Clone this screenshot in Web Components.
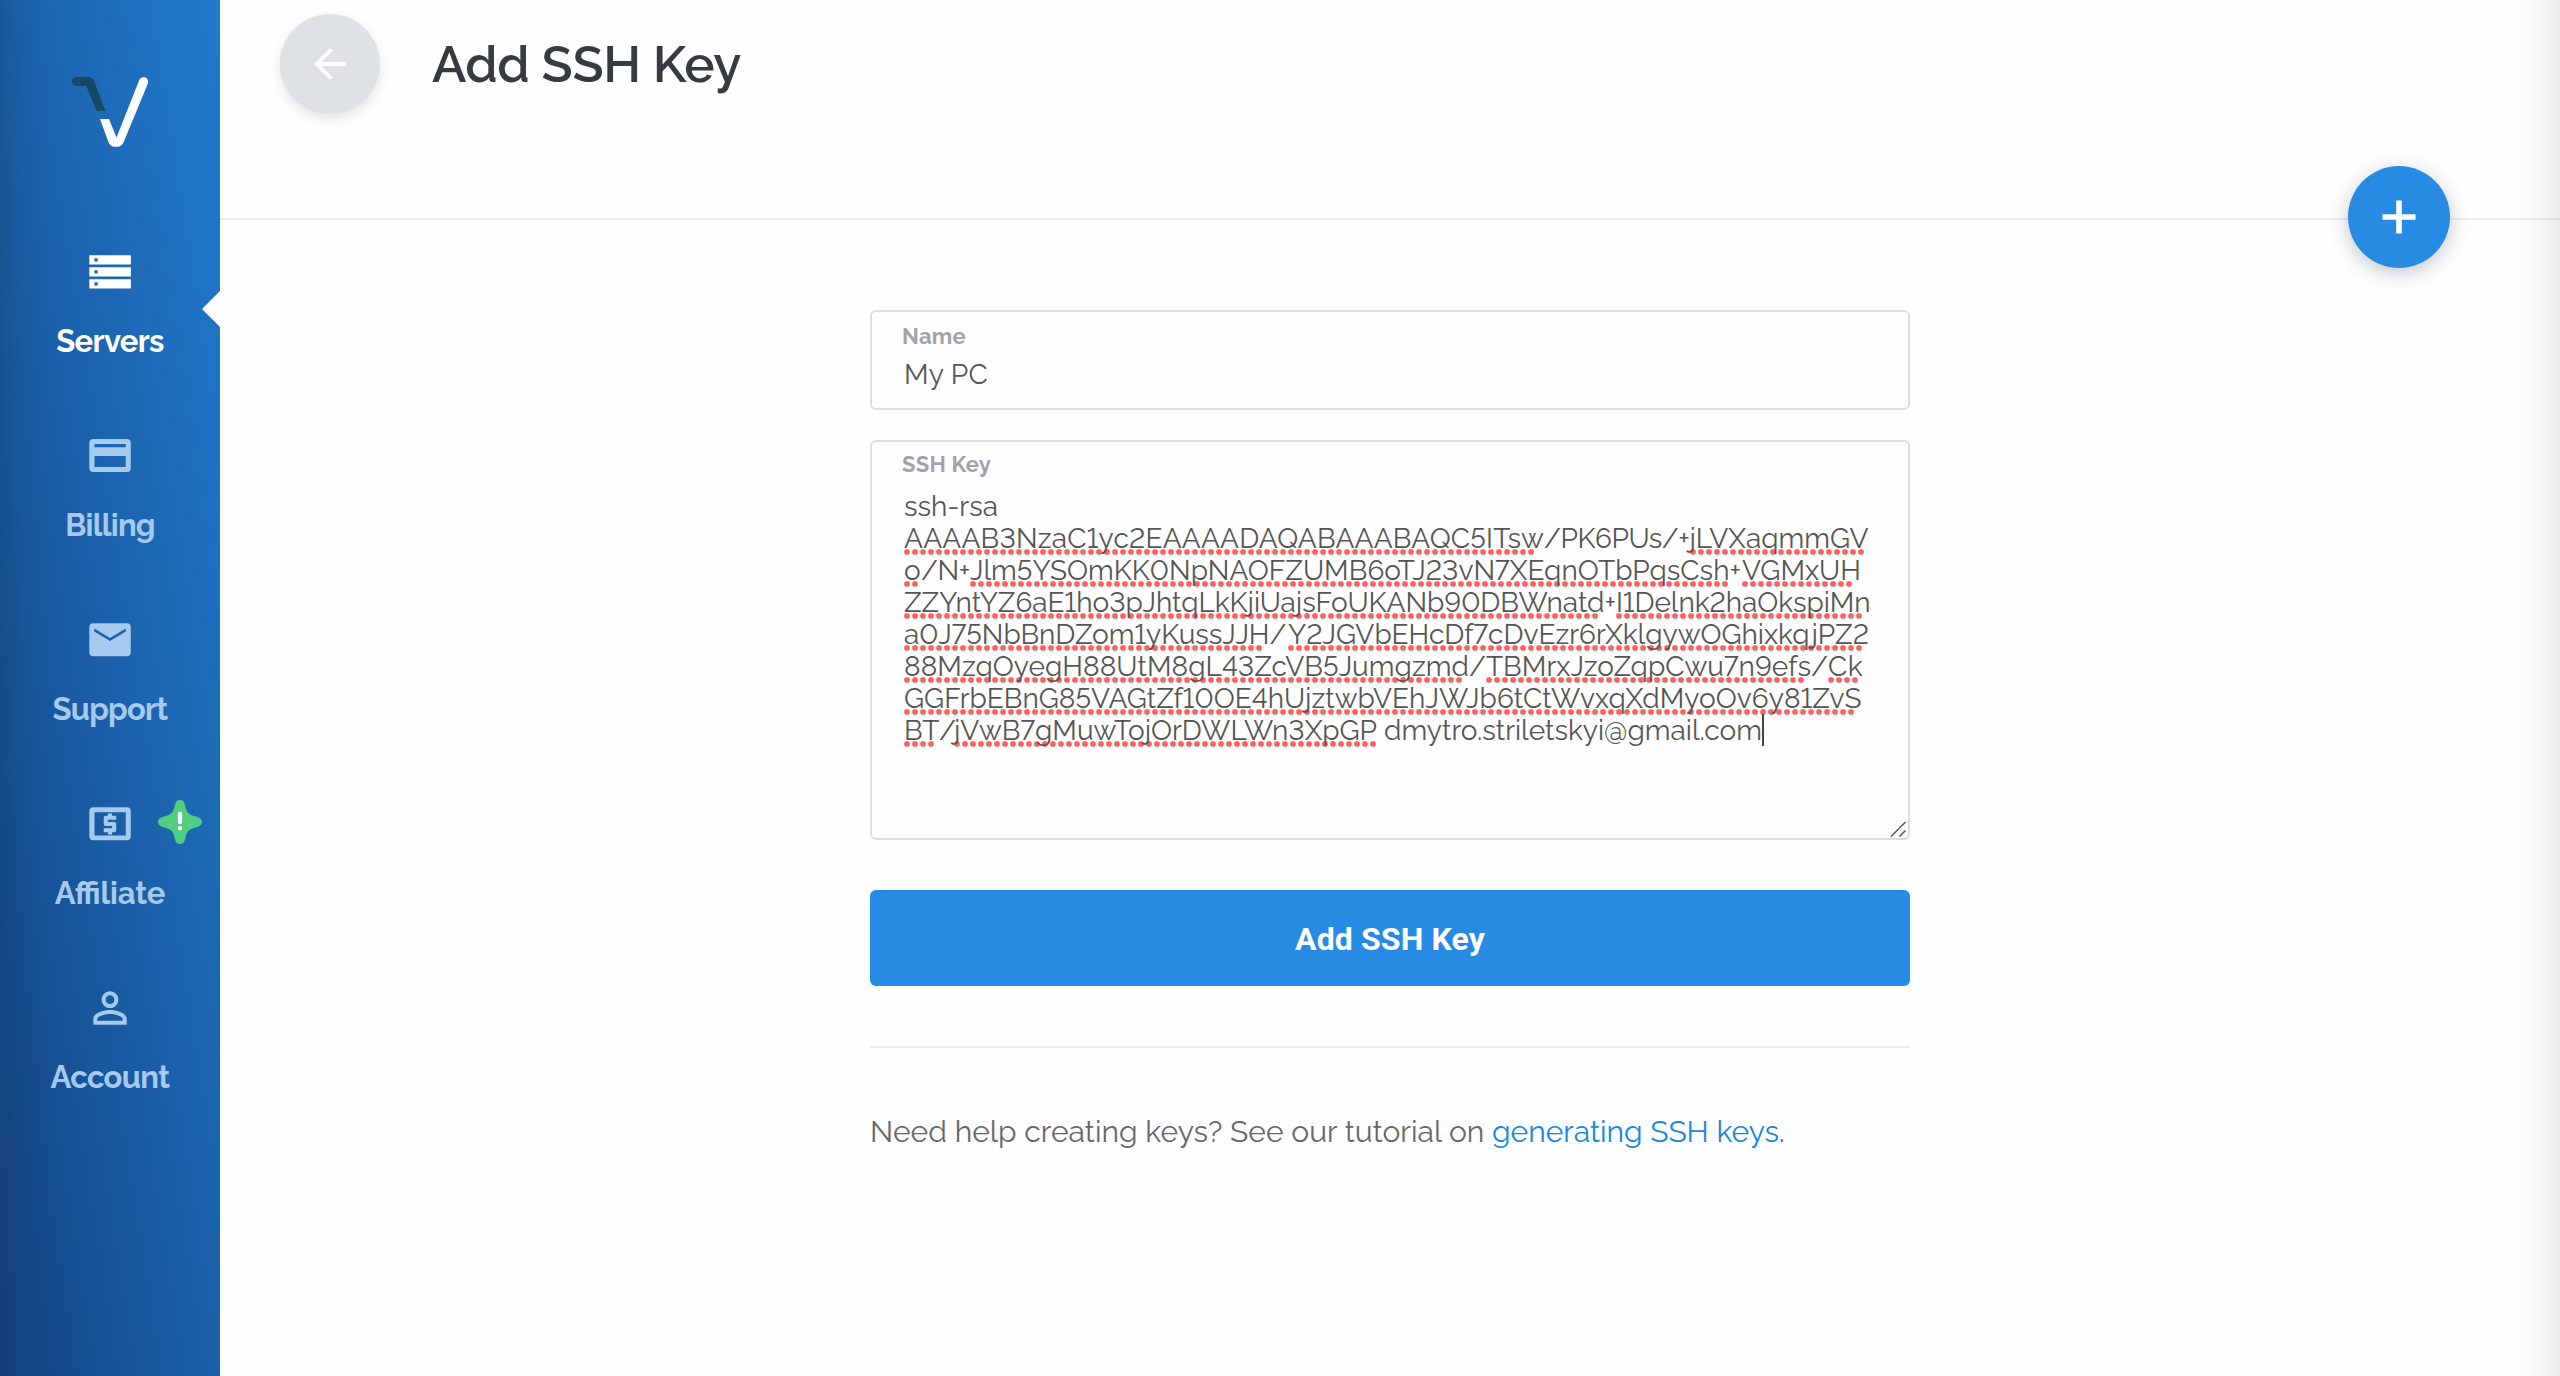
<!DOCTYPE html>
<html lang="en">
<head>
<meta charset="utf-8">
<title>Add SSH Key</title>
<style>
  html, body { margin: 0; height: 100%; }
  body { background: #fefefe; font-family: Raleway, Lato, "Open Sans", sans-serif; font-variant-numeric: lining-nums; color: #555; overflow: hidden; }
</style>
</head>
<body>
<app-shell>
  <side-bar slot="side">
    <nav-item icon="servers" label="Servers" w="107.5" active></nav-item>
    <nav-item icon="billing" label="Billing" w="89.5"></nav-item>
    <nav-item icon="support" label="Support" w="115"></nav-item>
    <nav-item icon="affiliate" label="Affiliate" w="110.5" badge></nav-item>
    <nav-item icon="account" label="Account" w="119"></nav-item>
  </side-bar>
  <page-header><fit-text w="309">Add SSH Key</fit-text></page-header>
  <form-panel>
    <text-field><fit-text slot="label" w="64">Name</fit-text><fit-text w="84">My PC</fit-text></text-field>
    <key-area></key-area>
    <submit-button><fit-text w="190">Add SSH Key</fit-text></submit-button>
    <help-note></help-note>
  </form-panel>
</app-shell>
<script>
const pending = [];
const define = (name, html, setup) => customElements.define(name, class extends HTMLElement {
  connectedCallback() {
    if (this.shadowRoot) return;
    const root = this.attachShadow({ mode: 'open' });
    const tpl = document.createElement('template');
    tpl.innerHTML = typeof html === 'function' ? html(this) : html;
    root.append(tpl.content.cloneNode(true));
    if (setup) setup(this, root);
  }
});

define('app-shell', `
  <style>
    :host { display: flex; width: 100%; height: 100vh; position: relative; }
    main { flex: 1; min-width: 0; display: flex; flex-direction: column; }
    .edge { position: absolute; right: 0; top: 0; bottom: 0; width: 54px; pointer-events: none;
      background: linear-gradient(to right, rgba(60,65,65,0), rgba(60,65,65,.012) 35%, rgba(60,65,65,.05) 72%, rgba(60,65,65,.11)); }
  </style>
  <slot name="side"></slot><main><slot></slot></main><div class="edge"></div>`);

define('side-bar', `
  <style>
    :host { display: flex; flex-direction: column; width: 220px; flex: none; height: 100%;
      background: linear-gradient(to right, rgba(20,50,80,.2), rgba(20,50,80,.07) 20px, rgba(20,50,80,0) 50px),
        linear-gradient(to top right, #134282 0%, #1b61ab 52%, #217bcf 100%); }
    .logo { height: 247px; flex: none; }
  </style>
  <svg class="logo" width="220" height="247" viewBox="0 0 220 247">
    <path fill="#154966" d="M76.4 77H88.5q4 0 5.5 3.8L105.5 111H96.6L86.3 86H76.4a4.5 4.5 0 0 1 0-9z"/>
    <path fill="#fff" d="M100 119h9L116.5 137.500 139.300 80a4.600 4.600 0 0 1 8.500 3.700L123.800 141.800q-2.100 5-6.200 5h-3.200q-4 0-6-4.800z"/>
  </svg>
  <slot></slot>`);

const icons = {
  servers: '<path fill-rule="evenodd" d="M4.300 8.200h41.600v9.400H4.300zm5.100 3v3.200h3.300v-3.200zM4.300 20.200h41.600v9.400H4.300zm5.100 3v3.200h3.300v-3.200zM4.300 32.200h41.600v9.400H4.300zm5.100 3v3.200h3.300v-3.200z"/>',
  billing: '<path fill-rule="evenodd" d="M8.300 8h33.500a4 4 0 0 1 4 4v25a4 4 0 0 1-4 4H8.300a4 4 0 0 1-4-4V12a4 4 0 0 1 4-4zM9.500 13v3.200h31.300V13zm0 12v11h31.300V25z"/>',
  support: '<path fill-rule="evenodd" d="M8.300 8.200h33.500a4 4 0 0 1 4 4v25a4 4 0 0 1-4 4H8.300a4 4 0 0 1-4-4v-25a4 4 0 0 1 4-4zM9.300 13.500v3L25 26.100l15.800-9.600v-3L25 23.100z"/>',
  affiliate: '<path fill-rule="evenodd" d="M8.300 8.200h33.500a4 4 0 0 1 4 4v25a4 4 0 0 1-4 4H8.300a4 4 0 0 1-4-4v-25a4 4 0 0 1 4-4zM9.500 13.200v23.300h31.300V13.200z"/><path transform="scale(2.0833)" d="M11 17h2v-1h1c.55 0 1-.45 1-1v-3c0-.55-.45-1-1-1h-3v-1h4V8h-2V7h-2v1h-1c-.55 0-1 .45-1 1v3c0 .55.45 1 1 1h3v1H9v2h2v1z"/>',
  account: '<path transform="scale(2.0833)" d="M12 5.900c1.160 0 2.100.94 2.100 2.100s-.94 2.100-2.100 2.100S9.900 9.160 9.900 8s.94-2.100 2.100-2.100m0 9c2.970 0 6.100 1.460 6.100 2.100v1.100H5.900V17c0-.64 3.130-2.100 6.100-2.100M12 4C9.790 4 8 5.790 8 8s1.790 4 4 4 4-1.790 4-4-1.790-4-4-4zm0 9c-2.670 0-8 1.340-8 4v3h16v-3c0-2.660-5.330-4-8-4z"/>'
};

define('nav-item', el => `
  <style>
    :host { display: flex; flex-direction: column; align-items: center; height: 184px; flex: none;
      position: relative; color: #a6caed; font-weight: 750; font-size: 31px; line-height: 40px;
      font-variant-ligatures: common-ligatures; font-feature-settings: "liga" 1; }
    :host([active]) { color: #fff; }
    .icon { margin-bottom: 24.300px; fill: currentColor; display: block; }
    .notch { position: absolute; right: 0; top: 44px; }
    .badge { position: absolute; left: 158px; top: 1px; }
  </style>
  <svg class="icon" width="50" height="50" viewBox="0 0 50 50">${icons[el.getAttribute('icon')]}</svg>
  <fit-text w="${el.getAttribute('w')}">${el.getAttribute('label')}</fit-text>
  ${el.hasAttribute('active') ? '<svg class="notch" width="18" height="36" viewBox="0 0 18 36"><path fill="#fefefe" d="M18 0v36L0 18z"/></svg>' : ''}
  ${el.hasAttribute('badge') ? `<svg class="badge" width="44" height="44" viewBox="0 0 44 44">
    <path fill="#51cc80" d="M22 0c3.200 0 4.500 2.200 5.200 5.500 1.300 6 3 9.200 9.600 10.800C41.500 17.400 44 19 44 22s-2.500 4.600-7.200 5.700c-6.600 1.600-8.300 4.800-9.600 10.800C26.500 41.800 25.200 44 22 44s-4.500-2.200-5.200-5.500c-1.300-6-3-9.200-9.600-10.800C2.500 26.600 0 25 0 22s2.500-4.600 7.200-5.700c6.600-1.600 8.300-4.800 9.600-10.800C17.500 2.200 18.800 0 22 0z"/>
    <path stroke="#fff" stroke-width="4.400" stroke-linecap="round" d="M22 14v8M22 28.200v.01"/></svg>` : ''}`);

/* Spreads its text over the advance width given in the w attribute. */
define('fit-text', '<style>:host { display: block; white-space: pre; } span { display: inline-block; }</style><span><slot></slot></span>', (el, root) => {
  const span = root.querySelector('span');
  const target = parseFloat(el.getAttribute('w'));
  const count = el.textContent.length;
  if (!target || !count) return;
  /* A slotted text gets its font from its parents, so it is measured once all of them are defined.
     Ligatures lower the number of gaps, so the gap is derived from two measured widths. */
  pending.push(() => {
    el.style.width = 'max-content';
    el.style.letterSpacing = '1px';
    const wide = span.getBoundingClientRect().width;
    el.style.letterSpacing = '-1px';
    const tight = span.getBoundingClientRect().width;
    const gaps = (wide - tight) / 2 || count;
    el.style.letterSpacing = ((target - (wide + tight) / 2) / gaps).toFixed(3) + 'px';
    el.style.width = target + 'px';
  });
});

define('page-header', `
  <style>
    :host { display: flex; box-sizing: border-box; height: 220px; flex: none; position: relative;
      padding: 14px 0 0 60px; gap: 52px; border-bottom: 2px solid #ebedf1; }
    .back { width: 100px; height: 100px; border-radius: 50%; background: #dee2e5; display: flex;
      align-items: center; justify-content: center; box-shadow: 0 5px 12px rgba(0,0,0,.11); }
    h1 { margin: 20px 0 0; font-size: 51px; line-height: 60px; font-weight: 600; color: #363b3f; }
    .plus { position: absolute; right: 110px; top: 166px; width: 102px; height: 102px; border-radius: 50%;
      background: #278be3; display: flex; align-items: center; justify-content: center;
      box-shadow: 0 5px 20px rgba(40,50,60,.28); }
  </style>
  <div class="back"><svg width="48" height="48" viewBox="0 0 24 24"><path fill="#fff" d="M20 11H7.830l5.590-5.590L12 4l-8 8 8 8 1.410-1.410L7.830 13H20v-2z"/></svg></div>
  <h1><slot></slot></h1>
  <div class="plus"><svg width="34" height="34" viewBox="0 0 34 34"><path stroke="#fff" stroke-width="5.600" d="M17 .5v33M.5 17h33"/></svg></div>`);

define('form-panel', `
  <style>:host { display: flex; flex-direction: column; width: 1040px; margin: 90px 0 0 650px; }</style><slot></slot>`);

const fieldCss = `
  :host { display: block; box-sizing: border-box; border: 2px solid #dcdddd; border-radius: 6px; position: relative; }
  .label { display: flex; font-size: 22px; line-height: 24px; font-weight: 700; color: #9ea4a9; }
  .value { font-size: 28px; line-height: 32px; color: #555; }`;

define('text-field', `
  <style>${fieldCss}
    :host { height: 100px; padding: 12.200px 0 0 30px; margin-bottom: 30px; }
    .value { display: flex; margin: 10.800px 0 0 2px; }
  </style>
  <div class="label"><slot name="label"></slot></div><div class="value"><slot></slot></div>`);

/* Each run: text, right edge in pixels from the text origin, number of spelling dots. */
const keyLines = [
  [['ssh-rsa', 94, 0]],
  [['AAAAB3NzaC1yc2EAAAADAQABAAABAQC5ITsw', 640, 79], ['/PK6PUs/+', 785.5, 0], ['jLVXaqmmGV', 964.5, 22]],
  [['o', 17, 2], ['/N+', 66, 0], ['Jlm5YSOmKK0NpNAOFZUMB6oTJ23vN7XEqnOTbPqsCsh', 825.5, 95], ['+', 838, 0], ['VGMxUH', 957, 14]],
  [['ZZYntYZ6aE1ho3pJhtqLkKjiUajsFoUKANb90DBWnatd', 700.5, 87], ['+', 712, 0], ['I1Delnk2haOkspiMn', 966.5, 31]],
  [['a0J75NbBnDZom1yKussJJH', 365.5, 45], ['/', 384, 0], ['Y2JGVbEHcDf7cDvEzr6rXklgywOGhixkqjPZ2', 965, 72]],
  [['88MzqOyegH88UtM8gL43ZcVB5Jumgzmd', 565, 70], ['/', 582, 0], ['TBMrxJzoZqpCwu7n9efs', 907, 40], ['/', 924, 0], ['Ck', 959, 4]],
  [['GGFrbEBnG85VAGtZf10OE4hUjztwbVEhJWJb6tCtWvxqXdMyoOv6y81ZvS', 957.5, 119]],
  [['BT', 35, 4], ['/', 50, 0], ['jVwB7gMuwTojOrDWLWn3XpGP', 473, 53], [' ', 480, 0], ['dmytro.striletskyi@gmail.com', 858, 0]]
];
define('key-area', () => `
  <style>${fieldCss}
    :host { height: 400px; padding: 9.900px 0 0 30px; margin-bottom: 50px; }
    .value { margin: 15.100px 0 0 2px; }
    .line { display: flex; height: 32px; position: relative; isolation: isolate; }
    .run { position: relative; height: 32px; }
    .run i { position: absolute; left: 0; top: 26px; height: 6px; z-index: -1;
      background: radial-gradient(circle at 3px 3px, #fb6260 2.200px, rgba(251,98,96,.6) 2.900px, transparent 3.400px) 0 0 / 8px 6px repeat-x; }
    .caret { width: 2px; height: 32px; background: #444; position: relative; top: -1px; }
    .grip { position: absolute; right: 2px; bottom: 1px; }
  </style>
  <div class="label"><fit-text w="89">SSH Key</fit-text></div>
  <div class="value">${keyLines.map((runs, n) => {
    let x = 0;
    return '<div class="line">' + runs.map(([text, end, dots]) => {
      const w = (end - x).toFixed(1);
      x = end;
      return `<span class="run">${dots ? `<i style="width:${dots * 8 - 1}px"></i>` : ''}<fit-text w="${w}">${text}</fit-text></span>`;
    }).join('') + (n === keyLines.length - 1 ? '<span class="caret"></span>' : '') + '</div>';
  }).join('')}</div>
  <svg class="grip" width="16" height="16" viewBox="0 0 16 16"><path stroke="#555" stroke-width="1.500" d="M1 15.500l14.500-14.500M9.500 15.500l6-6"/></svg>`);

define('submit-button', `
  <style>:host { display: flex; justify-content: center; box-sizing: border-box; height: 96px; padding-top: 1px;
    border-radius: 6px; background: #278be3; color: #fff; font: 700 32px/96px Roboto, sans-serif; }</style><slot></slot>`);

define('help-note', `
  <style>
    :host { display: block; margin-top: 60px; border-top: 2px solid #ececec; padding-top: 64px;
      font-size: 30px; line-height: 40px; color: #66676a; }
    p { margin: 0; display: flex; }
    a { color: #1787e0; }
  </style>
  <p><fit-text w="622">Need help creating keys? See our tutorial on </fit-text><a><fit-text w="287">generating SSH keys</fit-text></a><span>.</span></p>`);

pending.forEach(fit => fit());
</script>
</body>
</html>
